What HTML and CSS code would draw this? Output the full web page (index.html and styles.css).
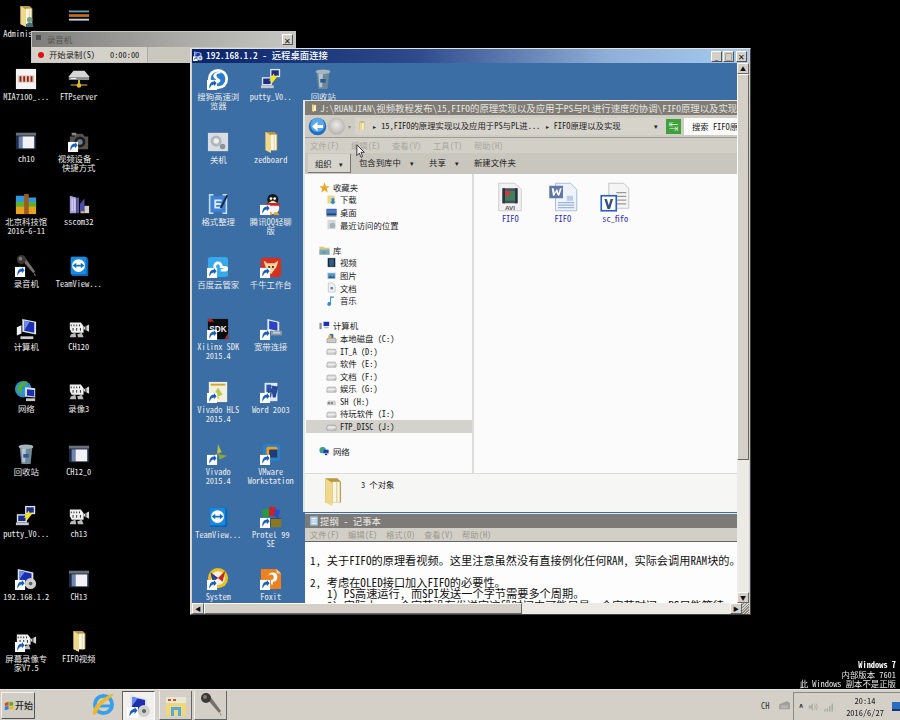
FILE: index.html
```html
<!DOCTYPE html>
<html lang="zh-CN">
<head>
<meta charset="utf-8">
<title>远程桌面</title>
<link rel="stylesheet" href="styles.css">
</head>
<body>
<svg class="defs" aria-hidden="true">
<defs>
<g id="sc"><rect x="0" y="13" width="11" height="11" fill="#fff"/><path d="M2.5 22c0-5 2-7 5-7v-2l3 3.5-3 3.5v-2c-2 0-3 1-5 4.500z" fill="#1a5fc0"/></g>
<g id="folder"><path d="M6 1h10l3 3v17H6z" fill="#b8983f"/><path d="M12 4h6v17h-6z" fill="#fbf6e0"/><path d="M6 1l6 4v19l-6-3z" fill="#efd88c"/><path d="M15 4h1v17h-1z" fill="#d8cfa8"/></g>
<g id="adm"><use href="#folder"/><circle cx="16" cy="16" r="3" fill="#74a088"/><path d="M12 24c0-4 2-5 4-5s4 1 4 5z" fill="#3f6f78"/></g>
<g id="lines"><path d="M1 6h22v2H1z" fill="#64a0a8"/><path d="M1 10h22v3H1z" fill="#c96a1c"/><path d="M1 15h22v2H1z" fill="#c8d8e0"/></g>
<g id="mia"><rect x="1" y="1" width="22" height="22" fill="#f4f4f4"/><rect x="3" y="8" width="18" height="8" fill="#e0c8b8"/><path d="M5 9h2v6H5zM9 9h2v6H9zM13 9h2v6h-2zM17 9h2v6h-2z" fill="#8c2218"/></g>
<g id="srv"><path d="M1 9l5-6h12l5 6v4H1z" fill="#d6d6d6"/><path d="M1 10h22v3H1z" fill="#8a8a8a"/><path d="M3 11h6v1H3z" fill="#fff"/><path d="M11 13h2v5h-2zM3 18h18v1H3z" fill="#d8c050"/><circle cx="12" cy="19" r="2.500" fill="#e8b820"/></g>
<g id="ch"><rect x="1" y="3" width="22" height="18" fill="#1e2a44"/><rect x="1" y="3" width="22" height="3" fill="#6a7078"/><rect x="8" y="7" width="13" height="13" fill="#f2f2f6"/><rect x="4" y="7" width="4" height="13" fill="#6f86b0"/></g>
<g id="cam"><path d="M2 7h5l2-3h7l2 3h4v14H2z" fill="#55524e"/><circle cx="13" cy="13" r="6" fill="#1c1c1c"/><circle cx="13" cy="13" r="3" fill="#70808c"/><rect x="4" y="3" width="5" height="3" fill="#888"/><use href="#sc"/></g>
<g id="bfolder"><path d="M1 3h10l2 2h10v6H1z" fill="#2f9ae0"/><path d="M1 10h22v13H1z" fill="#e8a020"/><path d="M1 10h22v5H1z" fill="#5cb030"/><rect x="10" y="1" width="5" height="22" fill="#9a5a20"/></g>
<g id="ss"><path d="M2 3l7 2v17H2z" fill="#a8a0d8"/><path d="M9 5h3v17H9z" fill="#5f58a0"/><path d="M4 6h1v14H4zM7 6h1v14H7z" fill="#e8e8ff"/><path d="M13 12l5-6v16h-5z" fill="#4850a8"/><path d="M18 14h5v8h-5z" fill="#d0d0d0"/><path d="M14 20h4v2h-4z" fill="#e8c040"/></g>
<g id="mic"><path d="M8 6l3-3 11 15-2 2z" fill="#77706a"/><circle cx="7" cy="5" r="5" fill="#3a3735"/><circle cx="6" cy="4" r="2" fill="#7f7a76"/><path d="M21 19l2 4-2-1z" fill="#9a9490"/></g>
<g id="micsc"><use href="#mic"/><use href="#sc"/></g>
<g id="tv"><path d="M3 2h17l2 2v19H5l-2-2z" fill="#0a64b8"/><rect x="3" y="2" width="17" height="19" rx="2" fill="#1a8ae0"/><circle cx="11.500" cy="11.500" r="7" fill="#fff"/><path d="M5 11.500l4-3v2h5v-2l4 3-4 3v-2H9v2z" fill="#1470c8"/></g>
<g id="pc"><path d="M8 1l15 3v14l-15-3z" fill="#dfe6f0"/><path d="M10 3l11 2v11L10 14z" fill="#1b2fb0"/><path d="M10 3l6 1-6 10z" fill="#6b8ce8"/><path d="M2 10l5-2v9l-5 2z" fill="#eef0f4"/><path d="M6 20h14v3H6z" fill="#cfcfcf"/></g>
<g id="film"><path d="M2 5h12l3 4v7H4l-2-4z" fill="#f0f0f0"/><path d="M3 7h1v2H3zM6 7h1v2H6zM9 7h1v2H9zM12 7h1v2h-1zM5 11h1v3H5zM9 11h1v3H9zM13 11h1v3h-1z" fill="#222"/><path d="M17 10l6-3v8l-6-3z" fill="#d8d8d8"/><rect x="19" y="8" width="1" height="6" fill="#222"/><path d="M3 18l5-2 1 5H2zM10 18l5-2 2 5h-6z" fill="#bbb"/></g>
<g id="net"><circle cx="9" cy="10" r="9" fill="#2f8fd0"/><path d="M3 7c3-4 7-6 10-5 1 3-2 5-5 5-1 3 1 5-2 8-3-2-4-5-3-8z" fill="#4fae3a"/><path d="M11 8l11 1v10l-11-1z" fill="#dfe6f0"/><path d="M13 10l8 1v7l-8-1z" fill="#1b2fb0"/><path d="M12 20h10v3H12z" fill="#c8c8c8"/></g>
<g id="bin"><path d="M5 4h14l-2 19H7z" fill="#6f8798"/><path d="M7 6h5l-1 15H8z" fill="#b4c4d0"/><ellipse cx="12" cy="4" rx="8" ry="2.500" fill="#a8b4bc"/><path d="M9 12h6v4H9z" fill="#2f5a90"/></g>
<g id="putty"><path d="M11 1h11v9H11z" fill="#dfe4ee"/><path d="M12.500 2.500h8v6h-8z" fill="#1c2c88"/><path d="M2 10h11v9H2z" fill="#dfe4ee"/><path d="M3.500 11.500h8v6h-8z" fill="#1c2c88"/><path d="M1 19h14v3H1z" fill="#c8c8d0"/><path d="M10 14l5-8 1 3 4-1-7 9-1-3z" fill="#f4e41c"/></g>
<g id="rdp"><path d="M3 1l17 4v15H3z" fill="#dfe6f0"/><path d="M5 3l13 3v12H5z" fill="#1b2fb0"/><path d="M5 3l6 1-6 8z" fill="#6b8ce8"/><circle cx="17" cy="17" r="6" fill="#d0d0d0"/><circle cx="17" cy="17" r="2" fill="#5a6a50"/><use href="#sc"/></g>
<g id="rec"><use href="#film"/><use href="#sc"/></g>
<g id="sogou"><circle cx="12" cy="12" r="11" fill="#fff"/><circle cx="12" cy="12" r="8" fill="#2a7cd0"/><path d="M16 6c-6-1-7 3-4 5s4 3 0 6l-4-1c4 0 4-2 1-4-4-3-2-8 5-8z" fill="#fff"/><use href="#sc"/></g>
<g id="off"><rect x="1" y="2" width="22" height="20" fill="#d9dde2"/><circle cx="10" cy="11" r="6" fill="#aeb6bf"/><circle cx="10" cy="11" r="3" fill="#f0f0f0"/><circle cx="17" cy="17" r="3" fill="#8a939c"/></g>
<g id="fmt"><path d="M2 1h5v2H4v18h3v2H2zM22 1h-5v2h3v18h-3v2h5z" fill="#bfe0ff"/><rect x="4" y="3" width="16" height="18" fill="#3f80d0"/><path d="M8 7h8v2h-6v2h5v2h-5v2h6v2H8z" fill="#d8eaff"/><path d="M14 16l7-14 2 1-7 14z" fill="#1c2c50"/></g>
<g id="qq"><ellipse cx="14" cy="7" rx="6" ry="6" fill="#161616"/><circle cx="12" cy="6" r="1.500" fill="#fff"/><circle cx="16" cy="6" r="1.500" fill="#fff"/><path d="M11 8.500h6l-3 2z" fill="#f0b020"/><ellipse cx="14" cy="16" rx="7" ry="7" fill="#f4f4f4"/><path d="M7 11h14l1 3H6z" fill="#d82020"/><path d="M9 21h4v3H7zM15 21h4l2 3h-6z" fill="#f0a020"/><use href="#sc"/></g>
<g id="baidu"><rect x="1" y="1" width="22" height="22" rx="3" fill="#38a8ec"/><path d="M7 11a5 5 0 0 1 10 0h3a3 3 0 0 1 0 6h-5v-3h3v-1h-4v-2a2 2 0 0 0-4 0v4H7z" fill="#fff"/><use href="#sc"/></g>
<g id="qn"><rect x="1" y="2" width="22" height="21" rx="3" fill="#d83020"/><path d="M4 5l4 3h8l4-3-2 7-6 8-6-8z" fill="#f0d8a0"/><path d="M9 11h2v2H9zM13 11h2v2h-2z" fill="#802010"/><use href="#sc"/></g>
<g id="sdk"><rect x="1" y="1" width="22" height="22" fill="#0c0c10"/><path d="M1 1h4l3 3H1zM19 23l4-6v6z" fill="#c02020"/><text x="12" y="15" font-size="9" font-weight="700" text-anchor="middle" fill="#f0f0f0" font-family="Liberation Sans">SDK</text><use href="#sc"/></g>
<g id="bb"><path d="M8 1l13 3v12l-13-3z" fill="#dfe6f0"/><path d="M10 3l9 2v9l-9-2z" fill="#2a44c0"/><path d="M12 14h12v5H12z" fill="#8a94a0"/><rect x="14" y="15" width="8" height="2" fill="#c8d0d8"/><use href="#sc"/></g>
<g id="hls"><rect x="2" y="1" width="20" height="22" fill="#f3efdc"/><path d="M4 3h16v2H4z" fill="#c8a830"/><path d="M12 7l5 8-5 2-3-5z" fill="#b8c858"/><path d="M10 15l4 4h-5z" fill="#e8c840"/><use href="#sc"/></g>
<g id="word"><path d="M5 2h14v20H5z" fill="#dfe8f4"/><path d="M7 4h5v8H7z" fill="#2f5aa8"/><path d="M12 5l8 1-3 12h-3l-1-6-1 6h-3L8 8h2l1 6 1-6h1z" fill="#264a98"/><use href="#sc"/></g>
<g id="viv"><path d="M12 1l4 9-5 2z" fill="#b8c040"/><path d="M12 12l10 2-8 4z" fill="#8aa838"/><path d="M3 15l8-3-1 10z" fill="#d8c848"/><use href="#sc"/></g>
<g id="vm"><rect x="3" y="1" width="19" height="19" rx="3" fill="#2a80c8"/><rect x="7" y="4" width="12" height="12" rx="2" fill="#f0a020"/><rect x="10" y="7" width="9" height="9" rx="1" fill="#1c3c80"/><use href="#sc"/></g>
<g id="pro"><path d="M2 5l7-3 2 9-7 3z" fill="#2a9a40"/><path d="M10 1h7l-1 10h-6z" fill="#d02020"/><path d="M17 3l5 2-2 9-5-3z" fill="#2a50c8"/><path d="M12 14h11v9H12z" fill="#e8c020"/><rect x="3" y="13" width="20" height="10" fill="#1c1c1c" opacity=".45"/><use href="#sc"/></g>
<g id="sys"><circle cx="12" cy="11" r="11" fill="#e8c020"/><circle cx="12" cy="11" r="7.500" fill="#f4f0e4"/><path d="M4 5l8 6 8-8-3 12-5-4-6 4z" fill="#c82818"/><path d="M4 5l8 6-6 4z" fill="#284890"/><use href="#sc"/></g>
<g id="fox"><path d="M1 1h17l5 5v17H1z" fill="#ee8020"/><path d="M18 1l5 5h-5z" fill="#f8d0a0"/><path d="M9 9a5 5 0 1 1 5 6v3h-2v-5a3 3 0 1 0-3-3z" fill="#fff"/><use href="#sc"/></g>
<g id="arw"><circle cx="12" cy="12" r="11" fill="#1f6ec0"/><circle cx="12" cy="10" r="9" fill="#5aa8e8"/><path d="M5 12l7-6v4h7v4h-7v4z" fill="#fff"/></g>
<g id="star"><path d="M12 1l3 8h8l-6 5 2 9-7-5-7 5 2-9-6-5h8z" fill="#f0a820"/></g>
<g id="dl"><path d="M3 3h13l4 3v15H3z" fill="#ecd88a"/><path d="M12 9v8h-3l6 6 6-6h-3V9z" fill="#2f86d0"/></g>
<g id="desk"><rect x="1" y="4" width="22" height="15" fill="#1c4488"/><rect x="2" y="5" width="20" height="9" fill="#4a7cc0"/><rect x="1" y="19" width="22" height="2" fill="#888"/></g>
<g id="rec2"><path d="M3 2h18v20H3z" fill="#d4d8dc"/><circle cx="14" cy="14" r="6" fill="#a8b0b8"/></g>
<g id="lib"><path d="M1 4h9l2 2h11v15H1z" fill="#d8c878"/><path d="M1 10h22v11H1z" fill="#78a8d0"/><path d="M5 18l6-5 5 5z" fill="#60a050"/></g>
<g id="vid"><rect x="4" y="2" width="16" height="20" fill="#3a4a5c"/><rect x="7" y="6" width="10" height="12" fill="#2c5f94"/><path d="M4 3h3v18H4zM17 3h3v18h-3z" fill="#20282f"/></g>
<g id="pic"><rect x="2" y="5" width="20" height="15" fill="#dce8f0"/><rect x="4" y="7" width="16" height="11" fill="#5a98c8"/><path d="M4 18l6-6 4 3 3-2 3 5z" fill="#2f5a88"/></g>
<g id="doc"><path d="M5 2h10l5 5v15H5z" fill="#f0f0f0" stroke="#9aa" stroke-width="1"/><rect x="10" y="11" width="5" height="5" fill="#3f78c0"/></g>
<g id="note"><path d="M9 3h8v3h-6v13a4 4 0 1 1-2-3z" fill="#2f88d8"/></g>
<g id="comp"><rect x="9" y="3" width="14" height="11" fill="#dfe4ee"/><rect x="10" y="4" width="12" height="9" fill="#1b2fb0"/><rect x="1" y="6" width="5" height="14" fill="#8a94a0"/><rect x="11" y="15" width="10" height="3" fill="#bbb"/></g>
<g id="hdd"><path d="M2 13l2-4h16l2 4v7H2z" fill="#dcdcdc" stroke="#777" stroke-width="1"/><path d="M3 14h18v1H3z" fill="#fff"/><path d="M17 17h3v1h-3z" fill="#5a9a4a"/></g>
<g id="sys2"><path d="M2 14l2-3h16l2 3v7H2z" fill="#c8ccc8" stroke="#777" stroke-width="1"/><path d="M8 2h8v9H8z" fill="#3868b0"/><path d="M5 5h7v6H5z" fill="#e8b830"/></g>
<g id="nwd"><path d="M2 14l2-4h16l2 4v6H2z" fill="#d0d0d0"/><path d="M4 13h5v5H4zM11 13h4v5h-4z" fill="#7c8a78"/></g>
<g id="nw"><circle cx="8" cy="9" r="7" fill="#2f9ac8"/><path d="M3 6c3-3 6-4 8-3l-3 6-3 4z" fill="#50a848"/><rect x="10" y="8" width="11" height="8" fill="#1c44a0"/><path d="M13 17h5v3h-5z" fill="#243c70"/></g>
<g id="avi"><path d="M3 1h13l5 5v17H3z" fill="#f1f1f1" stroke="#b5b5b5" stroke-width=".5"/><rect x="6" y="5" width="12" height="12" fill="#455060"/><rect x="8" y="7" width="8" height="8" fill="#3f7f5a"/><path d="M8 7h4v4H8z" fill="#c04040"/><path d="M6 5h2v12H6zM16 5h2v12h-2z" fill="#2c343f"/><text x="12" y="22.200" font-size="5" font-weight="700" text-anchor="middle" fill="#555" font-family="Liberation Sans">AVI</text></g>
<g id="doc2"><path d="M6 1h12l5 5v17H6z" fill="#eef3fb" stroke="#7f9cc8" stroke-width=".5"/><path d="M15 11h5v4h-5z" fill="#b6cde8"/><path d="M8 16h13v1H8zM8 18h13v1H8zM8 20h13v1H8z" fill="#9cb4d8"/><rect x="1" y="3" width="11" height="10" fill="#6078a8"/><path d="M3 5h1.500l1 4 1-3h1l1 3 1-4H11l-2 6H8L6.500 8 5 11H4z" fill="#fff"/></g>
<g id="vf"><path d="M7 1h12l4 4v16H7z" fill="#f4f4f4" stroke="#aaa" stroke-width=".5"/><path d="M13 8h8v1h-8zM13 11h8v1h-8zM13 14h8v1h-8zM13 17h8v1h-8z" fill="#999"/><rect x="1" y="11" width="12" height="12" fill="#fff" stroke="#2860c0" stroke-width="1.300"/><path d="M3.500 13.500h2l1.500 5 1.500-5h2l-2.500 8h-2z" fill="#385080"/></g>
<g id="np"><rect x="3" y="1" width="18" height="22" fill="#a8c8e8"/><path d="M6 5h12v2H6zM6 9h12v2H6zM6 13h12v2H6zM6 17h12v2H6z" fill="#f0f4f8"/></g>
<g id="flag"><path d="M2 5l9-3v9l-9 1z" fill="#d8481c"/><path d="M13 2l9 1v8l-9 1z" fill="#6ca820"/><path d="M2 13l9-1v8l-9 2z" fill="#2f7ed8"/><path d="M13 13l9-1v9l-9-1z" fill="#f0b818"/></g>
<g id="ie"><circle cx="12" cy="12" r="9" fill="none" stroke="#38a0e8" stroke-width="4"/><path d="M6 12h14v3H7z" fill="#38a0e8"/><path d="M1 22c-2-4 6-16 20-21 4 0 -3 5-6 7C9 12 6 18 5 21c-1 2-3 2-4 1z" fill="#f0b830"/></g>
<g id="fx"><rect x="2" y="4" width="20" height="19" fill="#f0d878"/><rect x="2" y="4" width="20" height="6" fill="#e8e8d8"/><path d="M4 6h3v2H4zM9 6h3v2H9z" fill="#d05030"/><rect x="7" y="14" width="10" height="9" fill="#58a8e0"/><rect x="10" y="17" width="4" height="6" fill="#f0d878"/></g>
<g id="spk"><path d="M3 9h4l5-5v16l-5-5H3z" fill="#b0b0a8"/><path d="M15 7c2 3 2 7 0 10M18 5c3 4 3 10 0 14" fill="none" stroke="#a0a098" stroke-width="1.500"/></g>
<g id="bars"><path d="M2 17h3v4H2zM7 14h3v7H7zM12 10h3v11h-3zM17 5h3v16h-3z" fill="#a8aea0"/></g>
<g id="gear"><path d="M2 10l14-6 6 3v12H2z" fill="#a0a098"/><path d="M5 12h13v5H5z" fill="#b8b8b0"/></g>
</defs>
</svg>

<div class="screen">
<main class="desktop">
  <div class="grid">
    <div class="it"><svg class="ic" viewBox="0 0 24 24"><use href="#adm"/></svg><div class="lb">Administr..</div></div>
    <div class="it"><svg class="ic" viewBox="0 0 24 24"><use href="#lines"/></svg></div>
    <div class="it"><svg class="ic" viewBox="0 0 24 24"><use href="#mia"/></svg><div class="lb">MIA7100_...</div></div>
    <div class="it"><svg class="ic" viewBox="0 0 24 24"><use href="#srv"/></svg><div class="lb">FTPserver</div></div>
    <div class="it"><svg class="ic" viewBox="0 0 24 24"><use href="#ch"/></svg><div class="lb">ch10</div></div>
    <div class="it"><svg class="ic" viewBox="0 0 24 24"><use href="#cam"/></svg><div class="lb">视频设备 -<br>快捷方式</div></div>
    <div class="it"><svg class="ic" viewBox="0 0 24 24"><use href="#bfolder"/></svg><div class="lb">北京科技馆<br>2016-6-11</div></div>
    <div class="it"><svg class="ic" viewBox="0 0 24 24"><use href="#ss"/></svg><div class="lb">sscom32</div></div>
    <div class="it"><svg class="ic" viewBox="0 0 24 24"><use href="#micsc"/></svg><div class="lb">录音机</div></div>
    <div class="it"><svg class="ic" viewBox="0 0 24 24"><use href="#tv"/></svg><div class="lb">TeamView...</div></div>
    <div class="it"><svg class="ic" viewBox="0 0 24 24"><use href="#pc"/></svg><div class="lb">计算机</div></div>
    <div class="it"><svg class="ic" viewBox="0 0 24 24"><use href="#film"/></svg><div class="lb">CH120</div></div>
    <div class="it"><svg class="ic" viewBox="0 0 24 24"><use href="#net"/></svg><div class="lb">网络</div></div>
    <div class="it"><svg class="ic" viewBox="0 0 24 24"><use href="#film"/></svg><div class="lb">录像3</div></div>
    <div class="it"><svg class="ic" viewBox="0 0 24 24"><use href="#bin"/></svg><div class="lb">回收站</div></div>
    <div class="it"><svg class="ic" viewBox="0 0 24 24"><use href="#ch"/></svg><div class="lb">CH12_0</div></div>
    <div class="it"><svg class="ic" viewBox="0 0 24 24"><use href="#putty"/></svg><div class="lb">putty_V0...</div></div>
    <div class="it"><svg class="ic" viewBox="0 0 24 24"><use href="#film"/></svg><div class="lb">ch13</div></div>
    <div class="it"><svg class="ic" viewBox="0 0 24 24"><use href="#rdp"/></svg><div class="lb">192.168.1.2</div></div>
    <div class="it"><svg class="ic" viewBox="0 0 24 24"><use href="#ch"/></svg><div class="lb">CH13</div></div>
    <div class="it"><svg class="ic" viewBox="0 0 24 24"><use href="#rec"/></svg><div class="lb">屏幕录像专<br>家V7.5</div></div>
    <div class="it"><svg class="ic" viewBox="0 0 24 24"><use href="#folder"/></svg><div class="lb">FIFO视频</div></div>
  </div>

  <section class="recorder">
    <div class="rec-title"><span class="rec-mini"></span><span class="rec-name">录音机</span><span class="btn-x">✕</span></div>
    <div class="rec-row"><div class="rec-left"><span class="dot"></span><span class="rec-start">开始录制(S)</span><span class="rec-time">0:00:00</span></div></div>
  </section>

  <section class="rdp">
    <div class="rdp-title">
      <svg class="mini" viewBox="0 0 24 24"><use href="#rdp"/></svg>
      <span class="rdp-name">192.168.1.2 - 远程桌面连接</span>
      <span class="caps"><span class="cap">_</span><span class="cap">□</span><span class="cap">✕</span></span>
    </div>
    <div class="rdp-mid">
      <div class="view">
        <div class="grid inner">
          <div class="it"><svg class="ic" viewBox="0 0 24 24"><use href="#sogou"/></svg><div class="lb">搜狗高速浏览器</div></div>
          <div class="it"><svg class="ic" viewBox="0 0 24 24"><use href="#off"/></svg><div class="lb">关机</div></div>
          <div class="it"><svg class="ic" viewBox="0 0 24 24"><use href="#fmt"/></svg><div class="lb">格式整理</div></div>
          <div class="it"><svg class="ic" viewBox="0 0 24 24"><use href="#baidu"/></svg><div class="lb">百度云管家</div></div>
          <div class="it"><svg class="ic" viewBox="0 0 24 24"><use href="#sdk"/></svg><div class="lb">Xilinx SDK 2015.4</div></div>
          <div class="it"><svg class="ic" viewBox="0 0 24 24"><use href="#hls"/></svg><div class="lb">Vivado HLS 2015.4</div></div>
          <div class="it"><svg class="ic" viewBox="0 0 24 24"><use href="#viv"/></svg><div class="lb">Vivado 2015.4</div></div>
          <div class="it"><svg class="ic" viewBox="0 0 24 24"><use href="#tv"/></svg><div class="lb">TeamView...</div></div>
          <div class="it"><svg class="ic" viewBox="0 0 24 24"><use href="#sys"/></svg><div class="lb">System</div></div>
          <div class="it"><svg class="ic" viewBox="0 0 24 24"><use href="#putty"/></svg><div class="lb">putty_V0..</div></div>
          <div class="it"><svg class="ic" viewBox="0 0 24 24"><use href="#folder"/></svg><div class="lb">zedboard</div></div>
          <div class="it"><svg class="ic" viewBox="0 0 24 24"><use href="#qq"/></svg><div class="lb">腾讯QQ轻聊版</div></div>
          <div class="it"><svg class="ic" viewBox="0 0 24 24"><use href="#qn"/></svg><div class="lb">千牛工作台</div></div>
          <div class="it"><svg class="ic" viewBox="0 0 24 24"><use href="#bb"/></svg><div class="lb">宽带连接</div></div>
          <div class="it"><svg class="ic" viewBox="0 0 24 24"><use href="#word"/></svg><div class="lb">Word 2003</div></div>
          <div class="it"><svg class="ic" viewBox="0 0 24 24"><use href="#vm"/></svg><div class="lb">VMware Workstation</div></div>
          <div class="it"><svg class="ic" viewBox="0 0 24 24"><use href="#pro"/></svg><div class="lb">Protel 99 SE</div></div>
          <div class="it"><svg class="ic" viewBox="0 0 24 24"><use href="#fox"/></svg><div class="lb">Foxit</div></div>
          <div class="it"><svg class="ic" viewBox="0 0 24 24"><use href="#bin"/></svg><div class="lb">回收站</div></div>
          <div class="it"></div>
          <div class="it"></div>
          <div class="it"><div class="ghost"></div><div class="lb">Altium</div></div>
        </div>

        <section class="explorer">
          <div class="ex-title"><svg class="mini-t" viewBox="0 0 24 24"><use href="#folder"/></svg>J:\RUANJIAN\视频教程发布\15,FIFO的原理实现以及应用于PS与PL进行速度的协调\FIFO原理以及实现</div>
          <div class="ex-nav">
            <svg class="back" viewBox="0 0 24 24"><use href="#arw"/></svg>
            <span class="fwd"></span>
            <span class="chev">▾</span>
            <div class="addr">
              <svg class="mini" viewBox="0 0 24 24"><use href="#folder"/></svg>
              <span class="crumbs"><span class="car">▸</span> 15,FIFO的原理实现以及应用于PS与PL进．．． <span class="car">▸</span> FIFO原理以及实现</span>
              <span class="drop">▾</span>
            </div>
            <span class="refresh">↹</span>
            <span class="search">搜索 FIFO原</span>
          </div>
          <div class="ex-menu"><span>文件(F)</span><span>编辑(E)</span><span>查看(V)</span><span>工具(T)</span><span>帮助(H)</span></div>
          <div class="ex-cmd">
            <span class="cmd on">组织 <i>▾</i></span>
            <span class="cmd">包含到库中 <i>▾</i></span>
            <span class="cmd">共享 <i>▾</i></span>
            <span class="cmd">新建文件夹</span>
          </div>
          <div class="ex-body">
            <nav class="pane">
              <div class="row grp"><svg class="ni" viewBox="0 0 24 24"><use href="#star"/></svg>收藏夹</div>
              <div class="row"><svg class="ni" viewBox="0 0 24 24"><use href="#dl"/></svg>下载</div>
              <div class="row"><svg class="ni" viewBox="0 0 24 24"><use href="#desk"/></svg>桌面</div>
              <div class="row"><svg class="ni" viewBox="0 0 24 24"><use href="#rec2"/></svg>最近访问的位置</div>
              <div class="row grp sp"><svg class="ni" viewBox="0 0 24 24"><use href="#lib"/></svg>库</div>
              <div class="row"><svg class="ni" viewBox="0 0 24 24"><use href="#vid"/></svg>视频</div>
              <div class="row"><svg class="ni" viewBox="0 0 24 24"><use href="#pic"/></svg>图片</div>
              <div class="row"><svg class="ni" viewBox="0 0 24 24"><use href="#doc"/></svg>文档</div>
              <div class="row"><svg class="ni" viewBox="0 0 24 24"><use href="#note"/></svg>音乐</div>
              <div class="row grp sp"><svg class="ni" viewBox="0 0 24 24"><use href="#comp"/></svg>计算机</div>
              <div class="row"><svg class="ni" viewBox="0 0 24 24"><use href="#sys2"/></svg>本地磁盘 (C:)</div>
              <div class="row"><svg class="ni" viewBox="0 0 24 24"><use href="#hdd"/></svg>IT_A (D:)</div>
              <div class="row"><svg class="ni" viewBox="0 0 24 24"><use href="#hdd"/></svg>软件 (E:)</div>
              <div class="row"><svg class="ni" viewBox="0 0 24 24"><use href="#hdd"/></svg>文档 (F:)</div>
              <div class="row"><svg class="ni" viewBox="0 0 24 24"><use href="#hdd"/></svg>娱乐 (G:)</div>
              <div class="row"><svg class="ni" viewBox="0 0 24 24"><use href="#nwd"/></svg>SH (H:)</div>
              <div class="row"><svg class="ni" viewBox="0 0 24 24"><use href="#hdd"/></svg>待玩软件 (I:)</div>
              <div class="row sel"><svg class="ni" viewBox="0 0 24 24"><use href="#hdd"/></svg>FTP_DISC (J:)</div>
              <div class="row grp sp"><svg class="ni" viewBox="0 0 24 24"><use href="#nw"/></svg>网络</div>
            </nav>
            <div class="files">
              <div class="file"><svg class="fi" viewBox="0 0 24 24"><use href="#avi"/></svg><span>FIFO</span></div>
              <div class="file"><svg class="fi" viewBox="0 0 24 24"><use href="#doc2"/></svg><span>FIFO</span></div>
              <div class="file"><svg class="fi" viewBox="0 0 24 24"><use href="#vf"/></svg><span>sc_fifo</span></div>
            </div>
          </div>
          <div class="ex-status"><svg class="st-ic" viewBox="0 0 24 24"><use href="#folder"/></svg><span>3 个对象</span></div>
        </section>

        <section class="notepad">
          <div class="np-title"><svg class="mini" viewBox="0 0 24 24"><use href="#np"/></svg>提纲 - 记事本</div>
          <div class="np-menu"><span>文件(F)</span><span>编辑(E)</span><span>格式(O)</span><span>查看(V)</span><span>帮助(H)</span></div>
          <div class="np-text">
            <p>1, 关于FIFO的原理看视频。这里注意虽然没有直接例化任何RAM, 实际会调用RAM块的。</p>
            <p class="next">2, 考虑在OLED接口加入FIFO的必要性。</p>
            <p class="ind">1) PS高速运行, 而SPI发送一个字节需要多个周期。</p>
            <p class="ind">2) 实际上, 一个字节没有发送完这段时间内可能只是一个字节时间, PS只能等待</p>
          </div>
        </section>

        <svg class="cursor" viewBox="0 0 12 18"><path d="M1 1v13l3-3 2 5 2-1-2-5h4z" fill="#eee" stroke="#222" stroke-width="1"/></svg>
      </div>
      <div class="vbar">
        <span class="sb">▲</span>
        <span class="vthumb"></span>
        <span class="vtrack"></span>
        <span class="sb">▼</span>
      </div>
    </div>
    <div class="hbar">
      <span class="sb">◀</span>
      <span class="hthumb"></span>
      <span class="htrack"></span>
      <span class="sb">▶</span>
      <span class="grip"></span>
    </div>
  </section>

  <aside class="mark">
    <div class="mark-a">Windows 7</div>
    <div>内部版本 7601</div>
    <div>此 Windows 副本不是正版</div>
  </aside>
</main>

<footer class="taskbar">
  <div class="start"><svg class="flag" viewBox="0 0 24 24"><use href="#flag"/></svg>开始</div>
  <svg class="ie" viewBox="0 0 24 24"><use href="#ie"/></svg>
  <div class="tb active"><svg class="tbi" viewBox="0 0 24 24"><use href="#rdp"/></svg></div>
  <div class="tb"><svg class="tbi" viewBox="0 0 24 24"><use href="#fx"/></svg></div>
  <div class="tb"><svg class="tbi" viewBox="0 0 24 24"><use href="#mic"/></svg></div>
  <div class="lang">CH</div>
  <svg class="tray-gear" viewBox="0 0 24 24"><use href="#gear"/></svg>
  <div class="tray">
    <span class="up">^</span>
    <svg class="ti" viewBox="0 0 24 24"><use href="#spk"/></svg>
    <svg class="ti" viewBox="0 0 24 24"><use href="#bars"/></svg>
    <div class="clock"><div>20:14</div><div>2016/6/27</div></div>
    <span class="showd"></span>
  </div>
</footer>
</div>
</body>
</html>
```

FILE: styles.css
```css
* { box-sizing: border-box; }
html, body { margin: 0; padding: 0; background: #000; }
body {
  width: 900px;
  height: 720px;
  overflow: hidden;
  font-family: "Noto Sans CJK SC", "Liberation Mono", sans-serif;
  font-feature-settings: "hwid";
  font-size: 8.4px;
  line-height: 9px;
  color: #e8e8e8;
}
.defs { position: absolute; width: 0; height: 0; }
.screen { width: 900px; height: 720px; display: flex; flex-direction: column; filter: blur(.4px); }
.desktop { position: relative; flex: 1; background: #000; overflow: hidden; }

.grid { display: grid; grid-template-columns: repeat(2, 52.5px); grid-auto-rows: 62.5px; }
.it { display: flex; flex-direction: column; align-items: center; padding-top: 5px; min-width: 0; }
.ic { width: 22px; height: 22px; flex: none; }
.ghost { width: 22px; height: 22px; flex: none; }
.lb { margin-top: 2px; width: 48px; text-align: center; color: #eaeaea; }

.recorder { position: absolute; left: 31px; top: 31px; width: 265px; height: 32px; background: #d2cfc7; border: 1px solid #c8c8c0; display: flex; flex-direction: column; }
.rec-title { height: 15px; display: flex; align-items: center; padding: 0 2px 0 4px; background: linear-gradient(90deg, #7d7d7b, #a9a9a5 55%, #c6c6c2); }
.rec-mini { width: 5px; height: 5px; background: #4f4f4d; margin-right: 6px; margin-top: -4px; }
.rec-name { color: #54534f; flex: 1; }
.btn-x { width: 11px; height: 11px; background: #d4d0c8; color: #111; font-size: 8px; line-height: 11px; text-align: center; border: 1px solid; border-color: #fff #555 #555 #fff; }
.rec-row { flex: 1; display: flex; background: #cac7bf; }
.rec-left { width: 116px; display: flex; align-items: center; background: #d4d1c9; border-right: 1px solid #aaa; padding-left: 6px; color: #222; }
.dot { width: 6px; height: 6px; border-radius: 50%; background: #e01010; margin-right: 5px; flex: none; }
.rec-start { width: 61px; flex: none; }
.rec-time { flex: none; }

.rdp { position: absolute; left: 190px; top: 48px; width: 561px; height: 567px; background: #d4d0c8; border: 1px solid; border-color: #e4e2dc #404040 #404040 #e4e2dc; padding: 0 1px; display: flex; flex-direction: column; }
.rdp-title { height: 14px; display: flex; align-items: center; gap: 3px; padding: 0 2px 0 1px; background: linear-gradient(90deg, #0a246a 0, #2c4a8c 40%, #8fb0d8 75%, #a6caf0 100%); color: #fff; flex: none; }
.mini { width: 10px; height: 10px; flex: none; }
.rdp-name { flex: 1; font-size: 9.4px; font-weight: 500; margin-top: -2px; }
.caps { display: flex; gap: 1px; }
.cap { width: 11px; height: 11px; background: #d4d0c8; color: #111; font-size: 8px; line-height: 10px; text-align: center; border: 1px solid; border-color: #fff #555 #555 #fff; }
.cap:last-child { margin-left: 1px; }
.rdp-mid { flex: 1; min-height: 0; display: flex; }
.view { position: relative; flex: 1; min-width: 0; background: #3a6ea5; overflow: hidden; }
.grid.inner { grid-template-columns: repeat(3, 52.5px); grid-template-rows: repeat(9, 62.5px); grid-auto-flow: column; width: 158px; }
.vbar { width: 12px; flex: none; display: flex; flex-direction: column; background: #e6e3dc; }
.sb { width: 12px; height: 11px; flex: none; background: #d4d0c8; color: #111; font-size: 6px; line-height: 10px; text-align: center; border: 1px solid; border-color: #fff #666 #666 #fff; }
.vthumb { height: 386px; background: #d4d0c8; border: 1px solid; border-color: #fff #666 #666 #fff; flex: none; }
.vtrack { flex: 1; background: #eceae5; }
.hbar { height: 11px; flex: none; display: flex; background: #e6e3dc; }
.hthumb { width: 318px; background: #d4d0c8; border: 1px solid; border-color: #fff #666 #666 #fff; flex: none; }
.htrack { flex: 1; background: #eceae5; }
.grip { width: 7px; flex: none; background: repeating-linear-gradient(135deg, #d4d0c8 0 1px, #888 1px 2px); }

.explorer { position: absolute; left: 111px; top: 37px; width: 434px; height: 412px; display: flex; flex-direction: column; background: #d4d0c8; border-left: 2px solid #e8e6e0; border-top: 1px solid #e8e6e0; color: #222; }
.ex-title { height: 14px; flex: none; display: flex; align-items: center; gap: 2px; background: #7f7c75; color: #e6e6e0; padding-left: 5px; white-space: nowrap; overflow: hidden; font-size: 9.4px; line-height: 13px; }
.mini-t { width: 8px; height: 8px; flex: none; }
.ex-nav { height: 23px; flex: none; display: flex; align-items: center; background: #cfccc4; padding-left: 3px; border-bottom: 1px solid #9c9a92; }
.back { width: 19px; height: 19px; flex: none; }
.fwd { width: 17px; height: 17px; border-radius: 50%; background: radial-gradient(circle at 50% 40%, #ecebe8, #a9a8a2); border: 1px solid #bbb; margin-left: 1px; flex: none; }
.chev { font-size: 6px; color: #888; width: 8px; text-align: center; flex: none; }
.addr { width: 311px; height: 17px; flex: none; display: flex; align-items: center; margin-left: 2px; background: #d6d3cb; gap: 3px; padding-left: 2px; }
.crumbs { flex: 1; min-width: 0; white-space: nowrap; overflow: hidden; padding-left: 3px; word-spacing: 1px; }
.car { font-size: 6px; }
.drop { font-size: 7px; width: 12px; color: #222; flex: none; }
.refresh { width: 15px; height: 15px; flex: none; background: #3fa03c; color: #e6f5e4; font-size: 9px; line-height: 15px; text-align: center; }
.search { margin-left: 3px; flex: 1; height: 17px; line-height: 16px; background: #fbfbfa; padding-left: 8px; white-space: nowrap; overflow: hidden; }
.ex-menu { height: 15px; flex: none; display: flex; align-items: center; padding-left: 5px; background: #d2cfc7; color: #aaa79f; }
.ex-menu span { width: 41px; flex: none; }
.ex-cmd { height: 21px; flex: none; display: flex; align-items: center; padding: 0 0 2px 3px; background: #c9c6be; }
.cmd { flex: none; margin-right: 15px; white-space: nowrap; }
.cmd i { font-style: normal; font-size: 7px; margin-left: 5px; }
.cmd.on { width: 43px; height: 19px; line-height: 18px; padding-left: 7px; background: #d8d5cd; border-right: 1px solid #777; border-bottom: 1px solid #777; margin: 2px 8px 0 0; }
.cmd.on i { margin-left: 3px; }
.ex-body { flex: 1; min-height: 0; display: flex; background: #fbfbfb; }
.pane { width: 167px; flex: none; padding-top: 6.8px; }
.row { height: 12.6px; line-height: 12.6px; display: flex; align-items: center; padding-left: 21px; white-space: nowrap; }
.row.grp { padding-left: 14px; }
.row.sp { margin-top: 12.6px; }
.row.sel { background: #d3d2cd; margin-left: 1px; padding-left: 20px; }
.ni { width: 11px; height: 11px; flex: none; margin-right: 3px; }
.files { flex: 1; display: flex; align-items: flex-start; padding: 8px 0 0 10px; border-left: 2px solid #dcdcd8; }
.file { width: 52.5px; flex: none; display: flex; flex-direction: column; align-items: center; color: #2c2cc0; }
.fi { width: 30px; height: 30px; margin-bottom: 2px; }
.ex-status { height: 39px; flex: none; display: flex; align-items: flex-start; padding: 3px 0 0 13px; background: #f6f6f5; border-top: 1px solid #dcdcd8; }
.ex-status span { margin: 3px 0 0 14px; }
.st-ic { width: 29px; height: 29px; flex: none; }

.notepad { position: absolute; left: 113px; top: 450px; width: 432px; height: 90px; display: flex; flex-direction: column; background: #fdfdfd; color: #111; border-top: 1px solid #e8e6e0; }
.np-title { height: 14px; flex: none; display: flex; align-items: center; gap: 1px; background: #7c7b78; color: #ecebe6; padding-left: 4px; font-size: 9.4px; }
.np-menu { height: 14px; flex: none; display: flex; align-items: center; padding-left: 5px; background: #d2d0c6; color: #9a978f; border-bottom: 1px solid #66655f; }
.np-menu span { width: 38px; flex: none; }
.np-text { flex: 1; overflow: hidden; padding: 13px 0 0 5px; font-size: 11.2px; line-height: 11.2px; white-space: nowrap; }
.np-text p { margin: 0; height: 11.2px; }
.np-text .next { margin-top: 11px; }
.np-text .ind { padding-left: 17px; }

.cursor { position: absolute; left: 164px; top: 81px; width: 10px; height: 15px; }

.mark { position: absolute; right: 4px; top: 660px; text-align: right; line-height: 9.5px; color: #e6e6e6; }
.mark-a { font-weight: 700; color: #fff; }

.taskbar { height: 31px; flex: none; display: flex; align-items: stretch; background: #d4d0c8; border-top: 1px solid #e6e4de; padding-top: 1px; color: #222; }
.start { width: 34px; margin: 1px 0 1px 1px; display: flex; align-items: center; gap: 1px; padding-left: 2px; background: #d0cdc5; border: 1px solid; border-color: #f2f1ec #555 #555 #f2f1ec; font-size: 9px; font-weight: 500; flex: none; }
.flag { width: 10px; height: 10px; flex: none; }
.ie { width: 23px; height: 23px; margin: 2px 7px 0 57px; flex: none; }
.tb { width: 33px; margin-right: 2px; flex: none; display: flex; align-items: center; justify-content: center; border-right: 1px solid #666; border-bottom: 1px solid #666; border-left: 1px solid #eee; }
.tb.active { background: #f1f0ec; border-top: 1px solid #555; border-left: 1px solid #666; border-right: 1px solid #fff; border-bottom: none; margin-right: 4px; }
.tbi { width: 24px; height: 24px; }
.lang { margin-left: auto; width: 16px; align-self: center; color: #333; }
.tray-gear { width: 13px; height: 13px; align-self: center; margin: 0 2px 0 1px; }
.tray { width: 107px; flex: none; display: flex; align-items: center; border-left: 1px solid #8c8a84; border-top: 1px solid #8c8a84; padding-left: 5px; margin-top: 1px; }
.up { width: 8px; font-weight: 700; flex: none; }
.ti { width: 12px; height: 12px; margin-right: 4px; flex: none; }
.clock { width: 50px; flex: none; text-align: center; line-height: 11.5px; margin-left: 1px; }
.showd { width: 10px; height: 9px; margin-left: 2px; background: #2a6cc0; border-bottom: 2px solid #123a70; flex: none; }
```
